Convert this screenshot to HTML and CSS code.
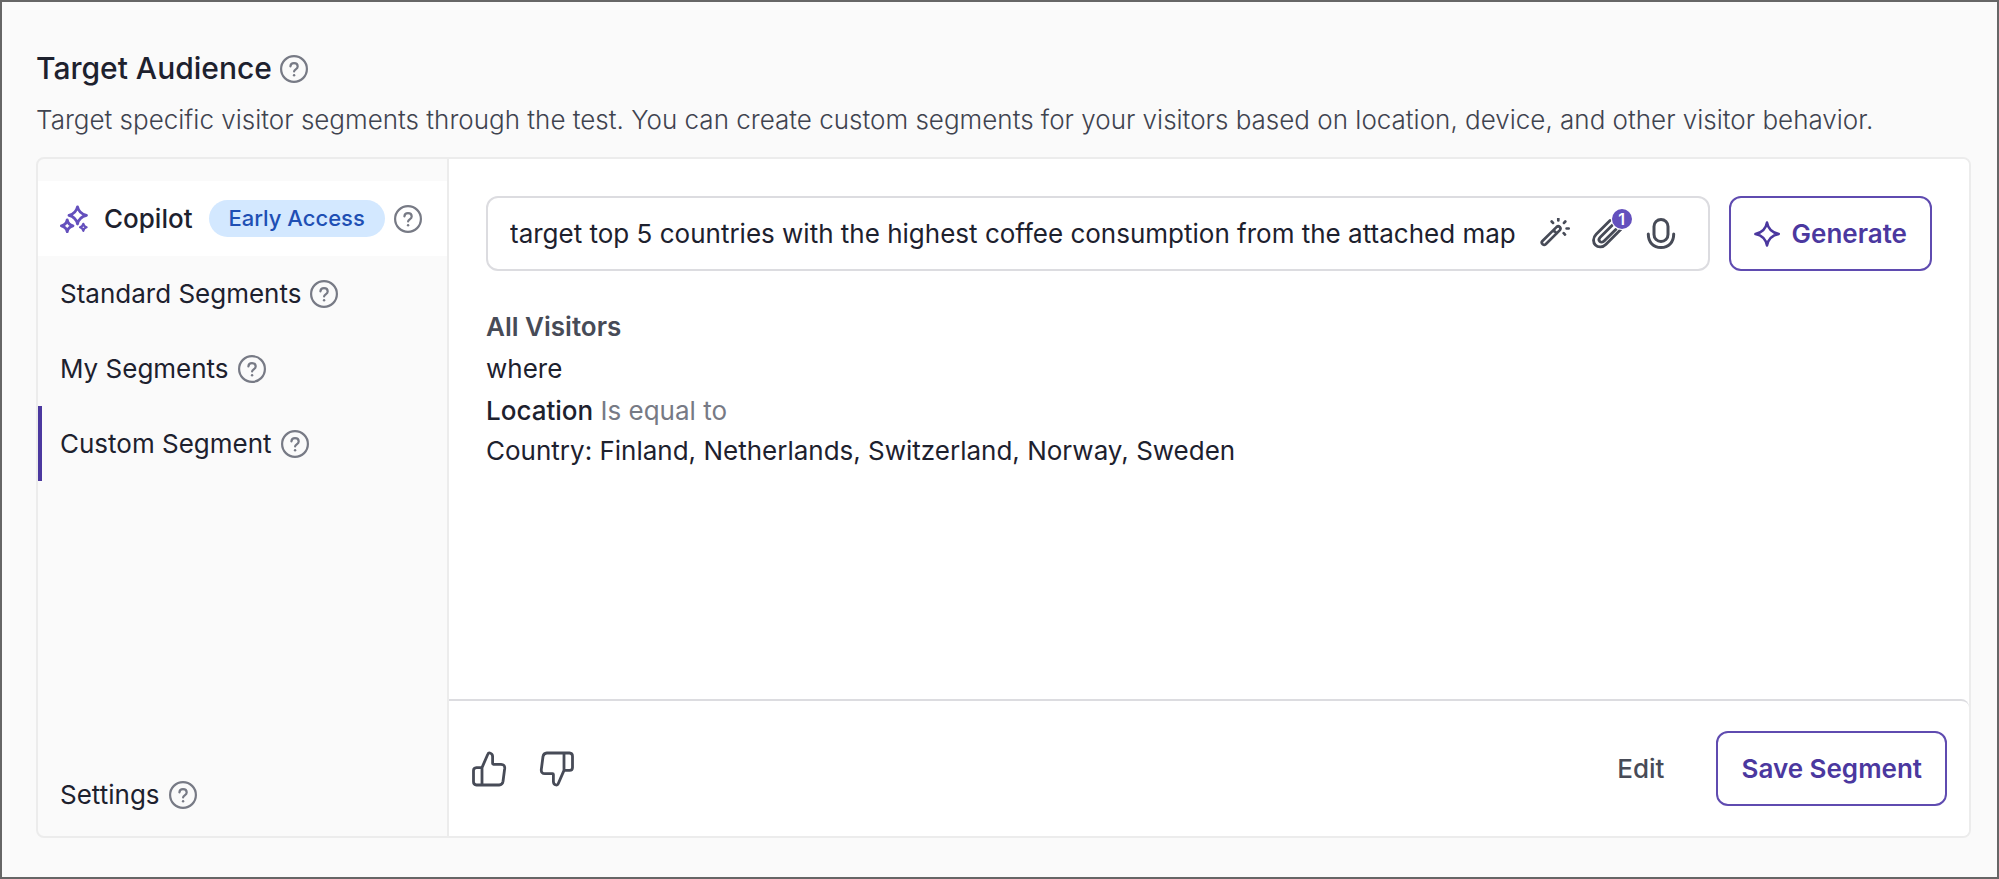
FILE: index.html
```html
<!DOCTYPE html>
<html lang="en">
<head>
<meta charset="utf-8">
<meta name="viewport" content="width=device-width, initial-scale=1">
<title>Target Audience</title>
<link rel="stylesheet" href="styles.css">
</head>
<body>
<svg class="sprite" aria-hidden="true">
  <symbol id="help" viewBox="0 0 28 28">
    <circle cx="14" cy="14" r="12.9" fill="none" stroke="currentColor" stroke-width="2.200"/>
    <path d="M10.4 11.3C10.6 9.2 12.1 8.1 14 8.1c2.100 0 3.700 1.400 3.700 3.300 0 2.700-3.600 3-3.600 5.100" fill="none" stroke="currentColor" stroke-width="2.200" stroke-linecap="round"/>
    <circle cx="14.100" cy="20.200" r="1.200" fill="currentColor"/>
  </symbol>
</svg>
<main class="page">
  <header class="intro">
    <h1 class="title">Target Audience <button class="help" type="button" aria-label="About target audience"><svg><use href="#help"/></svg></button></h1>
    <p class="lead">Target specific visitor segments through the test. You can create custom segments for your visitors based on location, device, and other visitor behavior.</p>
  </header>
  <section class="card">
    <nav class="side">
      <div class="item item-copilot">
        <a class="link link-copilot" href="#copilot">
          <svg class="sparkles" viewBox="0 0 28 28" fill="none" stroke="currentColor" stroke-width="2.800" stroke-linejoin="round">
            <path d="M17.500 1.800Q18.900 8.600 26.500 10.300Q18.900 12 17.500 19Q16 12 9 10.300Q16 8.600 17.500 1.800Z"/>
            <path d="M7.200 14.800Q8 19.700 13 20.800Q8 21.900 7.200 26.800Q6.400 21.900 1.400 20.800Q6.400 19.700 7.200 14.800Z"/>
            <path stroke-width="2.200" d="M23.300 18.800Q23.800 21.600 26.600 22.300Q23.800 23 23.300 25.800Q22.700 23 20 22.300Q22.700 21.600 23.300 18.800Z"/>
          </svg>
          Copilot
          <span class="badge">Early Access</span>
        </a>
        <button class="help" type="button" aria-label="About Copilot"><svg><use href="#help"/></svg></button>
      </div>
      <div class="item"><a class="link" href="#standard">Standard Segments</a><button class="help" type="button" aria-label="About standard segments"><svg><use href="#help"/></svg></button></div>
      <div class="item"><a class="link" href="#mine">My Segments</a><button class="help" type="button" aria-label="About my segments"><svg><use href="#help"/></svg></button></div>
      <div class="item item-active"><a class="link" href="#custom">Custom Segment</a><button class="help" type="button" aria-label="About custom segment"><svg><use href="#help"/></svg></button></div>
      <div class="item item-settings"><a class="link" href="#settings">Settings</a><button class="help" type="button" aria-label="About settings"><svg><use href="#help"/></svg></button></div>
    </nav>
    <div class="main">
      <div class="content">
        <form class="prompt">
          <div class="field">
            <input class="text" type="text" aria-label="Describe the segment" value="target top 5 countries with the highest coffee consumption from the attached map">
            <div class="tools">
              <button class="tool" type="button" aria-label="Improve prompt">
                <svg viewBox="0 0 32 32" fill="none" stroke="currentColor" stroke-width="2.700" stroke-linecap="round" stroke-linejoin="round">
                  <path d="M3.200 23.200L17.700 8.900Q19.300 7.600 20.800 9Q22.200 10.500 20.900 12.100L6.700 26.200Q5.200 27.500 3.700 26.200Q2 24.600 3.200 23.200ZM14.500 12.200L17.800 15.400"/>
                  <path d="M12.700 3.500L14 4.900M19.300 .500V2.500M26.300 3.500L25 4.900M27.600 10.500H29.700M24.700 15.200L26 16.600"/>
                </svg>
              </button>
              <button class="tool" type="button" aria-label="Attachments, 1 file">
                <svg viewBox="0 0 32 32" fill="none" stroke="currentColor" stroke-width="2.800" stroke-linecap="round">
                  <path d="M18 2.500L4.200 16.300C0.800 19.800 0.800 24.300 3.400 27C6.200 29.800 10.600 29.600 13.800 26.400L29 11.200"/>
                  <path d="M21.500 6L8.200 19.200C6.800 20.600 6.700 22.400 7.800 23.500C8.900 24.600 10.800 24.400 12.100 23.100L24 11.200"/>
                </svg>
                <span class="count">1</span>
              </button>
              <button class="tool" type="button" aria-label="Dictate">
                <svg viewBox="0 0 32 32" fill="none" stroke="currentColor" stroke-width="3" stroke-linecap="round">
                  <rect x="9" y="1.500" width="14" height="22" rx="7"/>
                  <path d="M3.300 16C3.300 24.500 8.500 29.500 16 29.500S28.700 24.500 28.700 16"/>
                </svg>
              </button>
            </div>
          </div>
          <button class="btn btn-generate" type="submit">
            <svg class="spark" viewBox="0 0 26 26" fill="none" stroke="currentColor" stroke-width="2.500" stroke-linejoin="round"><path d="M13 1.500Q14.600 11 24.800 13Q14.600 15 13 24.600Q11.400 15 1.400 13Q11.400 11 13 1.500Z"/></svg>
            Generate
          </button>
        </form>
        <div class="result">
          <h2 class="who">All Visitors</h2>
          <p class="line">where</p>
          <p class="line"><strong>Location</strong> <span class="op">Is equal to</span></p>
          <p class="line line-last">Country: Finland, Netherlands, Switzerland, Norway, Sweden</p>
        </div>
      </div>
      <footer class="foot">
        <button class="thumb" type="button" aria-label="Good result">
          <svg viewBox="0 0 36 36" fill="none" stroke="currentColor" stroke-width="2.800" stroke-linejoin="round"><path id="thumb" d="M11 16.600L16.800 3.200Q17.400 1.700 18.900 2C20.600 2.400 21.600 3.800 21.600 5.600V12.600Q21.600 13.300 22.400 13.300H30Q34 13.500 33.700 17.400L32 30.500Q31.400 33.800 28.200 34H5.500Q2.500 33.800 2.500 30.800V19.600Q2.500 16.800 5.500 16.600ZM11 16.600V34"/></svg>
        </button>
        <button class="thumb" type="button" aria-label="Bad result">
          <svg viewBox="0 0 36 36" fill="none" stroke="currentColor" stroke-width="2.800" stroke-linejoin="round"><use href="#thumb" transform="rotate(180 18 18)"/></svg>
        </button>
        <button class="edit" type="button">Edit</button>
        <button class="btn" type="button">Save Segment</button>
      </footer>
    </div>
  </section>
</main>
</body>
</html>
```
FILE: styles.css
```css
* { box-sizing: border-box; }
body {
  margin: 0;
  font-family: Inter, "Liberation Sans", sans-serif;
  font-size: 26px;
  line-height: 40px;
  color: #1d212e;
  background: #fafafa;
}
h1, h2, p { margin: 0; }
button {
  padding: 0;
  border: 0;
  background: none;
  font: inherit;
  color: inherit;
  cursor: pointer;
}
svg { display: block; }
.sprite { display: none; }
.page {
  display: flex;
  flex-direction: column;
  min-height: 100vh;
  padding: 46px 26px 39px 34px;
  border: 2px solid #666;
}
.title {
  display: flex;
  align-items: center;
  gap: 8px;
  font-size: 30px;
  font-weight: 500;
}
.title .help { padding-top: 2px; }
.lead { margin: 12px 0 17px; color: #3f434f; font-weight: 300; }
.help { flex: none; color: #777a85; }
.help svg { width: 28px; height: 28px; }
.card {
  flex: 1;
  display: flex;
  border: 2px solid #ececec;
  border-radius: 8px;
  overflow: hidden;
}
.side {
  flex: none;
  display: flex;
  flex-direction: column;
  width: 411px;
  padding: 22px 0 4px;
  border-right: 2px solid #ececec;
}
.item {
  display: flex;
  align-items: center;
  gap: 9px;
  min-height: 75px;
  padding-left: 18px;
  border-left: 4px solid transparent;
}
.item-copilot { background: #fff; border-left-color: #fff; font-weight: 500; }
.item-active { border-left-color: #4b389f; }
.item-settings { margin-top: auto; }
.link { color: inherit; text-decoration: none; }
.link-copilot { display: flex; align-items: center; gap: 16px; }
.sparkles { width: 28px; height: 28px; color: #6450bd; }
.badge {
  padding: 0 20px;
  border-radius: 19px;
  background: #d3e8ff;
  color: #1e4fb4;
  font-size: 22px;
  line-height: 37px;
}
.main {
  flex: 1;
  display: flex;
  flex-direction: column;
  min-width: 0;
  background: #fff;
}
.content { flex: 1; padding: 37px; }
.prompt { display: flex; gap: 19px; }
.field {
  flex: 1;
  display: flex;
  align-items: center;
  gap: 12px;
  min-width: 0;
  height: 75px;
  padding: 0 31px 0 22px;
  border: 2px solid #dcdce0;
  border-radius: 12px;
}
.text {
  flex: 1;
  min-width: 0;
  padding: 0;
  border: 0;
  outline: 0;
  background: none;
  font: inherit;
  color: inherit;
}
.tools { display: flex; gap: 21px; }
.tool { position: relative; flex: none; color: #474b57; }
.tool svg { width: 32px; height: 32px; }
.count {
  position: absolute;
  top: -9px;
  right: -8px;
  width: 20px;
  border-radius: 50%;
  background: #6450bd;
  box-shadow: 0 0 0 1px #fff;
  color: #fff;
  font-size: 16px;
  font-weight: 600;
  line-height: 20px;
}
.btn {
  display: flex;
  align-items: center;
  gap: 12px;
  height: 75px;
  padding: 0 23px;
  border: 2px solid #5f4bb0;
  border-radius: 12px;
  background: #fff;
  color: #4b389f;
  font-weight: 600;
}
.spark { width: 26px; height: 26px; }
.result { padding-top: 35px; }
.who { color: #474b57; font-size: inherit; font-weight: 600; line-height: 42px; }
.line { line-height: 42px; }
.line strong { font-weight: 500; }
.line-last { line-height: 38px; }
.op { color: #777a85; }
.foot {
  display: flex;
  align-items: center;
  gap: 32px;
  min-height: 137px;
  padding: 0 22px;
  border-top: 2px solid #dcdce0;
  border-top-right-radius: 8px;
}
.thumb { color: #474b57; }
.thumb svg { width: 36px; height: 36px; }
.edit { margin: 0 20px 0 auto; color: #474b57; font-weight: 500; }
```
